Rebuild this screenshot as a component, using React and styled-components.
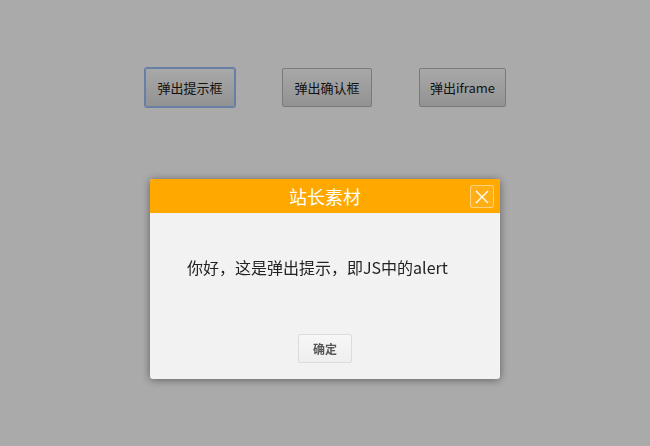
import React from 'react';
import styled, { createGlobalStyle } from 'styled-components';

const GlobalStyle = createGlobalStyle`
  html, body {
    margin: 0;
    padding: 0;
    background: #fff;
    font-family: "Open Sans", "Noto Sans CJK SC", sans-serif;
  }
`;

const Page = styled.div`
  height: 446px;
  padding-top: 68px;
  box-sizing: border-box;
`;

const ButtonRow = styled.div`
  display: flex;
  justify-content: center;
  gap: 47px;
  padding-left: 1px;
`;

const DemoButton = styled.button`
  width: ${(p) => p.w || 90}px;
  height: 39px;
  padding: 0;
  font-family: "Noto Sans CJK SC", "Open Sans", sans-serif;
  font-size: 13px;
  color: #1a1a1a;
  background: linear-gradient(#fdfdfd, #dcdcdc);
  border: 1px solid ${(p) => (p.focused ? '#9dbff8' : '#b7b7b7')};
  border-radius: 2px;
  box-shadow: ${(p) => (p.focused ? '0 0 0 1px #9dbff8' : 'none')};
  cursor: pointer;
`;

const Mask = styled.div`
  position: fixed;
  inset: 0;
  background: rgba(0, 0, 0, 0.333);
  display: flex;
  flex-direction: column;
  align-items: center;
  padding-top: 179px;
`;

const Dialog = styled.div`
  width: 350px;
  height: 200px;
  display: flex;
  flex-direction: column;
  background: #f2f2f2;
  border-radius: 3px;
  overflow: hidden;
  box-shadow: 0 1px 8px rgba(0, 0, 0, 0.45);
`;

const Header = styled.div`
  height: 34px;
  background: #ffa800;
  display: flex;
  align-items: center;
  justify-content: center;
  position: relative;
`;

const Title = styled.h3`
  margin: 0;
  font-family: "Noto Sans CJK SC", sans-serif;
  font-weight: 400;
  font-size: 18px;
  color: #fff;
`;

const CloseBtn = styled.button`
  position: absolute;
  right: 6px;
  top: 6px;
  width: 24px;
  height: 23px;
  padding: 0;
  display: flex;
  align-items: center;
  justify-content: center;
  background: rgba(255, 255, 255, 0.08);
  border: 1px solid rgba(255, 255, 255, 0.45);
  border-radius: 3px;
  cursor: pointer;
`;

const Body = styled.div`
  flex: 1;
  display: flex;
  flex-direction: column;
  padding: 41px 0 16px 37px;
`;

const Message = styled.p`
  margin: 0;
  font-family: "Noto Sans CJK SC", sans-serif;
  font-size: 16px;
  color: #222;
  line-height: 26px;
`;

const Footer = styled.div`
  margin-top: auto;
  display: flex;
  justify-content: center;
  padding-right: 37px;
`;

const OkButton = styled.button`
  width: 54px;
  height: 29px;
  padding: 0;
  font-family: "Noto Sans CJK SC", sans-serif;
  font-size: 12px;
  font-weight: 700;
  color: #555;
  background: linear-gradient(#f7f7f7, #eeeeee);
  border: 1px solid #dcdcdc;
  border-radius: 2px;
  cursor: pointer;
`;

export default function App() {
  return (
    <>
      <GlobalStyle />
      <Page>
        <ButtonRow>
          <DemoButton focused>弹出提示框</DemoButton>
          <DemoButton>弹出确认框</DemoButton>
          <DemoButton w={87}>弹出iframe</DemoButton>
        </ButtonRow>
      </Page>
      <Mask>
        <Dialog>
          <Header>
            <Title>站长素材</Title>
            <CloseBtn aria-label="close">
              <svg width="14" height="14" viewBox="0 0 14 14">
                <path d="M1 1 L13 13 M13 1 L1 13" stroke="#fff" strokeWidth="1.4" />
              </svg>
            </CloseBtn>
          </Header>
          <Body>
            <Message>你好，这是弹出提示，即JS中的alert</Message>
            <Footer>
              <OkButton>确定</OkButton>
            </Footer>
          </Body>
        </Dialog>
      </Mask>
    </>
  );
}
